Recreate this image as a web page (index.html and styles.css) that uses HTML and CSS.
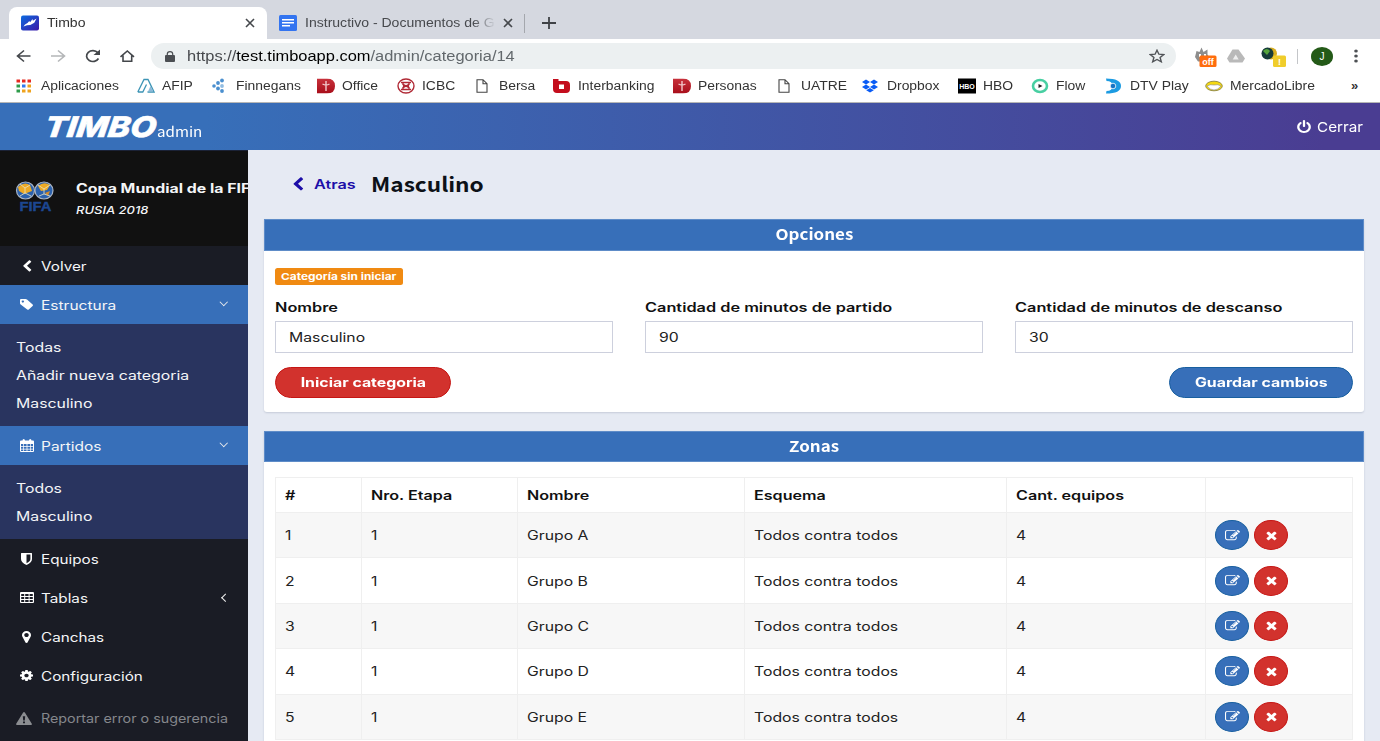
FILE: index.html
```html
<!DOCTYPE html>
<html lang="es">
<head>
<meta charset="utf-8">
<title>Timbo</title>
<link rel="stylesheet" href="styles.css">
</head>
<body>
<svg class="defs" width="0" height="0">
  <defs>
    <linearGradient id="gTimbo" x1="0" y1="0" x2="1" y2="1"><stop offset="0" stop-color="#0b6be0"/><stop offset="1" stop-color="#3c17a8"/></linearGradient>
    <linearGradient id="gRed" x1="0" y1="0" x2="0" y2="1"><stop offset="0" stop-color="#c8323c"/><stop offset="1" stop-color="#a80d1a"/></linearGradient>
    <symbol id="chev" viewBox="250 0 1292 1700" preserveAspectRatio="none"><path d="M1427 301l-531 531 531 531q19 19 19 45t-19 45l-166 166q-19 19-45 19t-45-19l-742-742q-19-19-19-45t19-45l742-742q19-19 45-19t45 19l166 166q19 19 19 45t-19 45z"/></symbol>
    <symbol id="power" viewBox="0 0 1792 1792" preserveAspectRatio="none"><path d="M1664 896q0 156-61 298t-164 245-245 164-298 61-298-61-245-164-164-245-61-298q0-182 80.5-343t226.5-270q43-32 95.5-25t83.5 50q32 42 24.5 94.5t-49.5 84.5q-98 74-151.5 181t-53.5 228q0 104 40.5 198.5t109.5 163.5 163.5 109.5 198.5 40.5 198.5-40.5 163.5-109.5 109.5-163.5 40.5-198.5q0-121-53.5-228t-151.5-181q-42-32-49.5-84.5t24.5-94.5q31-43 84-50t95 25q146 109 226.5 270t80.5 343zm-640-768v640q0 52-38 90t-90 38-90-38-38-90v-640q0-52 38-90t90-38 90 38 38 90z"/></symbol>
    <symbol id="times" viewBox="0 0 1792 1792" preserveAspectRatio="none"><path d="M1490 1322q0 40-28 68l-136 136q-28 28-68 28t-68-28l-294-294-294 294q-28 28-68 28t-68-28l-136-136q-28-28-28-68t28-68l294-294-294-294q-28-28-28-68t28-68l136-136q28-28 68-28t68 28l294 294 294-294q28-28 68-28t68 28l136 136q28 28 28 68t-28 68l-294 294 294 294q28 28 28 68z"/></symbol>
    <symbol id="edit" viewBox="0 0 1792 1792" preserveAspectRatio="none"><path d="M888 1184l116-116-152-152-116 116v56h96v96h56zm440-720q-16-16-33 1l-350 350q-17 17-1 33t33-1l350-350q17-17 1-33zm80 594v190q0 119-84.5 203.5t-203.5 84.5h-832q-119 0-203.5-84.5t-84.5-203.5v-832q0-119 84.5-203.5t203.5-84.5h832q63 0 117 25 15 7 18 23 3 17-9 29l-49 49q-14 14-32 8-23-6-45-6h-832q-66 0-113 47t-47 113v832q0 66 47 113t113 47h832q66 0 113-47t47-113v-126q0-13 9-22l64-64q15-15 35-7t20 29zm-96-738l288 288-672 672h-288v-288zm444 132l-92 92-288-288 92-92q28-28 68-28t68 28l152 152q28 28 28 68t-28 68z"/></symbol>
    <symbol id="cog" viewBox="128 128 1536 1536" preserveAspectRatio="none"><path d="M1152 896q0-106-75-181t-181-75-181 75-75 181 75 181 181 75 181-75 75-181zm512-109v222q0 12-8 23t-20 13l-185 28q-19 54-39 91 35 50 107 138 10 12 10 25t-9 23q-27 37-99 108t-94 71q-12 0-26-9l-138-108q-44 23-91 38-16 136-29 186-7 28-36 28h-222q-14 0-24.5-8.5t-11.5-21.5l-28-184q-49-16-90-37l-141 107q-10 9-25 9-14 0-25-11-126-114-165-168-7-10-7-23 0-12 8-23 15-21 51-66.5t54-70.5q-27-50-41-99l-183-27q-13-2-21-12.5t-8-23.5v-222q0-12 8-23t19-13l186-28q14-46 39-92-40-57-107-138-10-12-10-24 0-10 9-23 26-36 98.5-107.5t94.5-71.5q13 0 26 10l138 107q44-23 91-38 16-136 29-186 7-28 36-28h222q14 0 24.5 8.5t11.5 21.5l28 184q49 16 90 37l142-107q9-9 24-9 13 0 25 10 129 119 165 170 7 8 7 22 0 12-8 23-15 21-51 66.5t-54 70.5q26 50 41 98l183 28q13 2 21 12.5t8 23.5z"/></symbol>
    <symbol id="pin" viewBox="384 128 1024 1536" preserveAspectRatio="none"><path d="M1152 640q0-106-75-181t-181-75-181 75-75 181 75 181 181 75 181-75 75-181zm256 0q0 109-33 179l-364 774q-16 33-47.5 52t-67.5 19-67.5-19-46.5-52l-365-774q-33-70-33-179 0-212 150-362t362-150 362 150 150 362z"/></symbol>
    <symbol id="page" viewBox="0 0 12 14"><path d="M1 .7h6l4 4v8.6H1zM7 .7v4h4" fill="#fff" stroke="#444" stroke-width="1.1"/></symbol>
    <symbol id="dbadge" viewBox="0 0 18 15"><path d="M0 0h10q8 0 8 7.5T10 15H0z" fill="url(#gRed)"/><path d="M9 2.5v10M5.500 5.500q3.500 2 7 0" stroke="#f3c9cc" stroke-width="1.400" fill="none"/></symbol>
  </defs>
</svg>

<div class="tabs">
  <div class="tab active">
    <svg width="18" height="16" viewBox="0 0 18 16"><rect width="18" height="15" y=".5" rx="2" fill="url(#gTimbo)"/><path d="M2.500 11.500q1-2.500 4-3.500l1.800-2 .8 1.200L11.500 4l.4 1.800 3.600-2.300-2.200 4.200-4 2.300-3.300.2z" fill="#fff"/></svg>
    <span class="t">Timbo</span>
    <svg class="x" width="10" height="10" viewBox="0 0 10 10"><path d="M1 1l8 8M9 1L1 9"/></svg>
  </div>
  <div class="tab">
    <svg width="18" height="16" viewBox="0 0 18 16"><rect width="18" height="16" rx="1.500" fill="#3374f0"/><path d="M3 4.800h12M3 7.800h12M3 10.800h8" stroke="#fff" stroke-width="1.500"/></svg>
    <span class="t fade">Instructivo - Documentos de G</span>
    <svg class="x" width="10" height="10" viewBox="0 0 10 10"><path d="M1 1l8 8M9 1L1 9"/></svg>
  </div>
  <i class="tab-sep"></i>
  <svg width="14" height="12" viewBox="0 0 14 12"><path d="M7 0v12M0 6h14" stroke="#3f4246" stroke-width="1.800"/></svg>
</div>

<div class="toolbar">
  <svg width="130" height="20" viewBox="0 0 130 20" fill="none" stroke="#44474b" stroke-width="1.600">
    <path d="M14.500 10H1.500M8 4.500L1.500 10 8 15.500"/>
    <path d="M35 10h13M42 4.500l6.500 5.500-6.500 5.500" stroke="#b4b6b8"/>
    <path d="M82.500 12.500A6.300 5.400 0 1 1 81.800 6.700" stroke-width="1.700"/><path d="M84 3.500V9h-6.500z" fill="#44474b" stroke="none"/>
    <path d="M104.500 10.800L111.300 5l6.700 5.800M107 9.500V15.300h8.700V9.500"/>
  </svg>
  <div class="address">
    <svg width="10" height="11" viewBox="0 0 10 11"><rect y="4" width="10" height="7" rx="1" fill="#4b4e52"/><path d="M2.300 4V3a2.700 2.400 0 0 1 5.400 0v1" fill="none" stroke="#4b4e52" stroke-width="1.200"/></svg>
    <span class="t url">https://<b>test.timboapp.com</b><em>/admin/categoria/14</em></span>
    <svg class="star" width="16" height="14" viewBox="0 0 16 14"><path d="M8 1.200l1.900 4 4.900.4-3.700 2.900 1.200 4.300L8 10.500l-4.300 2.300 1.200-4.300L1.200 5.600l4.900-.4z" fill="none" stroke="#505357" stroke-width="1.400"/></svg>
  </div>
  <div class="exts">
    <svg width="96" height="24" viewBox="0 0 96 24">
      <path d="M1 13l1.500-6 3 1 2-4.500 2 4.500 4-2.500v5l2 3-2 4H4z" fill="#8d8d8d"/><path d="M5 10h2v3H5zM10 10h2v3h-2z" fill="#fff"/>
      <rect x="5.500" y="11.500" width="17" height="11.500" rx="1.500" fill="#ff6d0d"/>
      <path d="M38.500 5.500h6l6.500 9-2.500 4h-13L33 14.500z" fill="#b9b9b9"/><path d="M41.700 10.500l3 5h-6z" fill="#eee"/>
      <ellipse cx="77" cy="9.500" rx="6" ry="6" fill="#d8ae20"/><ellipse cx="73.500" cy="9.500" rx="6" ry="6" fill="#163b3a"/><path d="M69 7q4-4 7 0l-3 4z" fill="#55a43c"/>
      <rect x="79" y="11.500" width="13" height="11.500" rx="1.500" fill="#f0cd2c"/>
    </svg>
    <span class="badge off">off</span><span class="badge warn">!</span>
  </div>
  <i class="ext-sep"></i>
  <span class="avatar">J</span>
  <svg class="dots" width="4" height="14" viewBox="0 0 4 14" fill="#4d5054"><ellipse cx="2" cy="2" rx="1.800" ry="1.600"/><ellipse cx="2" cy="7" rx="1.800" ry="1.600"/><ellipse cx="2" cy="12" rx="1.800" ry="1.600"/></svg>
</div>

<div class="bookmarks">
  <div><svg viewBox="0 0 18 16"><path d="M.5 3h14.500" stroke="#e62a21" stroke-width="3" stroke-dasharray="3.500 2"/><path d="M.5 8H4M.5 13H4" stroke="#2e9b4a" stroke-width="3"/><path d="M6 8h3.500" stroke="#3079ee" stroke-width="3"/><path d="M11.500 8H15M6 13h3.500M11.500 13H15" stroke="#efa31e" stroke-width="3"/></svg><span class="t">Aplicaciones</span></div>
  <div><svg viewBox="0 0 18 16"><path d="M.8 14L7 1.500h4L17 14h-6.500M.8 14h5L9.500 6.500" fill="none" stroke="#3c94b5" stroke-width="1.300"/><path d="M11 13.500l2.500-5.500 3 5.500z" fill="#8dbad9"/></svg><span class="t">AFIP</span></div>
  <div><svg viewBox="0 0 18 16" fill="#4a8fcf"><circle cx="3" cy="8" r="1.800"/><circle cx="7" cy="5" r="1.900"/><circle cx="7" cy="10.500" r="1.900"/><circle cx="11" cy="2.500" r="1.900"/><circle cx="11" cy="8" r="1.900" fill="#92bde2"/><circle cx="11" cy="13" r="1.900"/></svg><span class="t">Finnegans</span></div>
  <div><svg viewBox="0 0 18 16"><use href="#dbadge" width="18" height="15" y=".5"/></svg><span class="t">Office</span></div>
  <div><svg viewBox="0 0 18 16" fill="none" stroke="#b02935" stroke-width="1.400"><ellipse cx="9" cy="8" rx="8" ry="7"/><path d="M4 4.500h10M6 8h6M4 11.500h10M6 4.500v2l6 3v2M12 4.500v2l-6 3v2"/></svg><span class="t">ICBC</span></div>
  <div><svg viewBox="0 0 18 16"><use href="#page" x="2" y="1" width="12" height="14"/></svg><span class="t">Bersa</span></div>
  <div><svg viewBox="0 0 18 16"><path fill-rule="evenodd" d="M0 1h5.500v2H13q4 0 4 4v4q0 4-4 4H4q-4 0-4-4zM6 6.500V11h5V6.500z" fill="#c40d1d"/></svg><span class="t">Interbanking</span></div>
  <div><svg viewBox="0 0 18 16"><use href="#dbadge" width="18" height="15" y=".5"/></svg><span class="t">Personas</span></div>
  <div><svg viewBox="0 0 18 16"><use href="#page" x="2" y="1" width="12" height="14"/></svg><span class="t">UATRE</span></div>
  <div><svg viewBox="0 0 18 16" fill="#0a5cf5"><path d="M4 1.500L8 4 4 6.500 0 4zM12 1.500L16 4l-4 2.500L8 4zM4 6.500L8 9l-4 2.500L0 9zM12 6.500L16 9l-4 2.500L8 9zM8 10l3.800 2.200L8 14.500l-3.800-2.300z"/></svg><span class="t">Dropbox</span></div>
  <div><svg viewBox="0 0 18 16"><rect y=".5" width="18" height="15" fill="#000"/><text x="9" y="10.500" text-anchor="middle" class="hbo">HBO</text></svg><span class="t">HBO</span></div>
  <div><svg viewBox="0 0 18 16"><ellipse cx="9" cy="8" rx="7" ry="6" fill="#fff" stroke="#48cfa2" stroke-width="2.600"/><path d="M7.500 6l4 2-4 2z" fill="#222"/></svg><span class="t">Flow</span></div>
  <div><svg viewBox="0 0 18 16"><path d="M1 .5q15 0 15 7.500T1 15.500L1.500 13q6 0 6-5t-6-5z" fill="#1c9be2"/><circle cx="8" cy="8" r="2.800" fill="#1574c4" stroke="#fff" stroke-width=".8"/></svg><span class="t">DTV Play</span></div>
  <div><svg viewBox="0 0 18 16"><ellipse cx="9" cy="8" rx="8.300" ry="4.800" fill="#f5d90f" stroke="#8f8741" stroke-width=".9"/><path d="M2 8q3.500-2 7-1 4-1 7 1-3 4-7 4T2 8z" fill="#fff" stroke="#888" stroke-width=".6"/></svg><span class="t">MercadoLibre</span></div>
  <b class="more">»</b>
</div>

<header class="appbar">
  <div class="brand"><span class="logo">TIMBO</span><span class="sub">admin</span></div>
  <a class="logout"><svg width="16" height="14"><use href="#power"/></svg><span class="t">Cerrar</span></a>
</header>

<div class="shell">
  <aside>
    <div class="profile">
      <svg width="40" height="34" viewBox="0 0 40 34"><g stroke="#a9b4c4" stroke-width="1.200"><ellipse cx="10.500" cy="11.500" rx="9" ry="8.500" fill="#2c62ad"/><ellipse cx="29" cy="11.500" rx="9" ry="8.500" fill="#2c62ad"/></g><path d="M3 8q6-6 12-2l2 6-8 3-5-3z" fill="#edaa25"/><path d="M23 7q6-5 12-1l-3 5-6 1z" fill="#edaa25"/><path d="M30 14l5-2-2 5z" fill="#d98b24"/><path d="M5 5l5 4 5-3M10 9v5l-5 3M10 14l6 3M23 6l6 4 6-4M29 10v5l-5 2M29 15l6 2" stroke="#e9e3c4" stroke-width=".8" fill="none"/><text x="4.500" y="32" textLength="32" lengthAdjust="spacingAndGlyphs" class="fifa">FIFA</text></svg>
      <div><strong class="t">Copa Mundial de la FIFA</strong><em class="t">RUSIA 2018</em></div>
    </div>
    <nav>
      <a class="item"><svg width="10" height="12"><use href="#chev"/></svg><span class="t">Volver</span></a>
      <a class="item on"><svg width="13" height="11" viewBox="0 0 13 11"><path fill-rule="evenodd" d="M0 1q0-1 1-1h4.500q.8 0 1.500.6L12.600 5.500q.8.700 0 1.400L8.800 10.500q-.8.700-1.600 0L.7 5.500Q0 5 0 4.200zM2.800 1.400a1.100 1 0 1 0 .1 0z"/></svg><span class="t">Estructura</span><i class="down"></i></a>
      <div class="subnav"><a class="t">Todas</a><a class="t">Añadir nueva categoria</a><a class="t">Masculino</a></div>
      <a class="item on"><svg width="14" height="13" viewBox="0 0 14 13"><path fill-rule="evenodd" d="M0 2.500q0-1 1-1h1.500Q2.500 0 3.700 0T5 1.500h4Q9 0 10.200 0t1.300 1.500H13q1 0 1 1V12q0 1-1 1H1q-1 0-1-1zM1 5v2h2.300V5zm3 0v2h2.600V5zm3.400 0v2H10V5zm3.300 0v2H13V5zM1 7.700v2h2.300v-2zm3 0v2h2.600v-2zm3.400 0v2H10v-2zm3.300 0v2H13v-2zM1 10.400v1.700h2.300v-1.700zm3 0v1.700h2.600v-1.700zm3.400 0v1.700H10v-1.700zm3.300 0v1.700H13v-1.700z"/></svg><span class="t">Partidos</span><i class="down"></i></a>
      <div class="subnav"><a class="t">Todos</a><a class="t">Masculino</a></div>
      <a class="item"><svg width="11" height="12" viewBox="0 0 11 12"><path fill-rule="evenodd" d="M0 .5Q0 0 .5 0h10q.5 0 .5.500V6q0 3.500-5.500 6Q0 9.500 0 6zM5.500 1.500v8.700Q9.400 8.500 9.400 6V1.500z"/></svg><span class="t">Equipos</span></a>
      <a class="item"><svg width="14" height="11" viewBox="0 0 14 11"><path fill-rule="evenodd" d="M0 1q0-1 1-1h12q1 0 1 1v9q0 1-1 1H1q-1 0-1-1zM1.200 2v2h3V2zm4 0v2h3.400V2zm4.400 0v2h3.200V2zM1.200 5v2h3V5zm4 0v2h3.400V5zm4.400 0v2h3.200V5zM1.200 8v2h3V8zm4 0v2h3.400V8zm4.400 0v2h3.200V8z"/></svg><span class="t">Tablas</span><i class="left"></i></a>
      <a class="item"><svg width="9" height="12"><use href="#pin"/></svg><span class="t">Canchas</span></a>
      <a class="item"><svg width="13" height="11"><use href="#cog"/></svg><span class="t">Configuración</span></a>
      <a class="item report"><svg width="16" height="13" viewBox="0 0 16 13"><path fill-rule="evenodd" d="M7 .7q1-1.400 2 0l6.800 11Q16.300 13 15 13H1Q-.3 13 .2 11.700zM6.800 4.300l.4 4.200h1.600l.4-4.200zM7 9.500v1.800h2V9.500z"/></svg><span class="t">Reportar error o sugerencia</span></a>
    </nav>
  </aside>

  <main>
    <div class="title"><svg width="12" height="14"><use href="#chev"/></svg><a class="t">Atras</a><h1>Masculino</h1></div>

    <section class="card options">
      <h2><span>Opciones</span></h2>
      <div class="body">
        <span class="label"><span class="t">Categoría sin iniciar</span></span>
        <div class="fields">
          <div><label class="t">Nombre</label><div class="input"><span class="t">Masculino</span></div></div>
          <div><label class="t">Cantidad de minutos de partido</label><div class="input"><span class="t">90</span></div></div>
          <div><label class="t">Cantidad de minutos de descanso</label><div class="input"><span class="t">30</span></div></div>
        </div>
        <div class="actions"><button class="btn red"><span class="t">Iniciar categoria</span></button><button class="btn blue"><span class="t">Guardar cambios</span></button></div>
      </div>
    </section>

    <section class="card zones">
      <h2><span>Zonas</span></h2>
      <table>
        <colgroup><col class="c1"><col class="c2"><col class="c3"><col class="c4"><col class="c5"><col class="c6"></colgroup>
        <thead><tr><th><span class="t">#</span></th><th><span class="t">Nro. Etapa</span></th><th><span class="t">Nombre</span></th><th><span class="t">Esquema</span></th><th><span class="t">Cant. equipos</span></th><th></th></tr></thead>
        <tbody>
          <tr><td><span class="t">1</span></td><td><span class="t">1</span></td><td><span class="t">Grupo A</span></td><td><span class="t">Todos contra todos</span></td><td><span class="t">4</span></td><td><div class="ops"><b class="blue"><svg width="15" height="13"><use href="#edit"/></svg></b><b class="red"><svg width="15" height="13"><use href="#times"/></svg></b></div></td></tr>
          <tr><td><span class="t">2</span></td><td><span class="t">1</span></td><td><span class="t">Grupo B</span></td><td><span class="t">Todos contra todos</span></td><td><span class="t">4</span></td><td><div class="ops"><b class="blue"><svg width="15" height="13"><use href="#edit"/></svg></b><b class="red"><svg width="15" height="13"><use href="#times"/></svg></b></div></td></tr>
          <tr><td><span class="t">3</span></td><td><span class="t">1</span></td><td><span class="t">Grupo C</span></td><td><span class="t">Todos contra todos</span></td><td><span class="t">4</span></td><td><div class="ops"><b class="blue"><svg width="15" height="13"><use href="#edit"/></svg></b><b class="red"><svg width="15" height="13"><use href="#times"/></svg></b></div></td></tr>
          <tr><td><span class="t">4</span></td><td><span class="t">1</span></td><td><span class="t">Grupo D</span></td><td><span class="t">Todos contra todos</span></td><td><span class="t">4</span></td><td><div class="ops"><b class="blue"><svg width="15" height="13"><use href="#edit"/></svg></b><b class="red"><svg width="15" height="13"><use href="#times"/></svg></b></div></td></tr>
          <tr><td><span class="t">5</span></td><td><span class="t">1</span></td><td><span class="t">Grupo E</span></td><td><span class="t">Todos contra todos</span></td><td><span class="t">4</span></td><td><div class="ops"><b class="blue"><svg width="15" height="13"><use href="#edit"/></svg></b><b class="red"><svg width="15" height="13"><use href="#times"/></svg></b></div></td></tr>
        </tbody>
      </table>
    </section>
  </main>
</div>
</body>
</html>
```
FILE: styles.css
```css
* { box-sizing: border-box; }
body { margin: 0; height: 741px; overflow: hidden; display: flex; flex-direction: column; background: #e6eaf3; font: 12.5px/20px Inter, sans-serif; color: #111; }
svg { display: block; flex: none; }
.defs { position: absolute; }
.t { display: inline-block; white-space: nowrap; transform: translateY(var(--dy, 0)) scaleX(var(--s, 1.26)); transform-origin: left center; }

/* browser chrome */
.tabs, .toolbar, .bookmarks { font-family: "Liberation Sans", Arial, sans-serif; flex: none; }
.tabs { height: 39px; background: #d5d8e0; display: flex; align-items: center; padding: 7px 0 0 9px; --s: 1.17; }
.tab { display: flex; align-items: center; height: 32px; padding: 0 12px; font-size: 12px; color: #47494d; width: 258px; }
.tab.active { background: #fff; border-radius: 8px 8px 0 0; color: #333; }
.tab .t { margin-left: 8px; }
.tab .x { margin-left: auto; fill: none; stroke: #45484c; stroke-width: 1.6; }
.tab .fade { width: 163px; overflow: hidden; -webkit-mask-image: linear-gradient(90deg, #000 88%, transparent); mask-image: linear-gradient(90deg, #000 88%, transparent); }
.tab-sep { width: 1px; height: 19px; background: #a4a7ad; margin: 0 17px 0 -1px; }
.toolbar { height: 35px; background: #fff; display: flex; align-items: center; padding: 0 0 1px 16px; }
.address { width: 1025px; height: 26px; margin-left: 5px; border-radius: 13px; background: #ecf0f1; display: flex; align-items: center; padding: 0 11px 0 14px; }
.url { margin-left: 12px; font-size: 14px; color: #47494d; --s: 1.173; }
.url b { font-weight: 400; color: #000; }
.url em { font-style: normal; color: #62686c; }
.star { margin-left: auto; }
.exts { position: relative; width: 96px; height: 24px; margin-left: 18px; }
.badge { position: absolute; top: 12px; height: 12px; font: 700 9px/12px "Liberation Sans", sans-serif; color: #fff; text-align: center; }
.off { left: 5px; width: 18px; }
.warn { left: 79px; width: 13px; }
.ext-sep { width: 1px; height: 15px; background: #c4c6c9; margin-left: 7px; }
.avatar { width: 22px; height: 19px; border-radius: 50%; background: #245a18; color: #fff; font-size: 10px; line-height: 19px; text-align: center; margin-left: 13px; }
.dots { margin-left: 21px; }
.bookmarks { height: 29px; background: #fff; border-bottom: 1px solid #b6b6b6; display: grid; grid-template-columns: 121px 74px 106px 80px 77px 79px 120px 103px 86px 96px 73px 74px 100px 146px auto; padding: 0 0 5px 16px; align-items: center; font-size: 12px; color: #333; --s: 1.157; }
.bookmarks div { display: flex; align-items: center; gap: 7px; }
.bookmarks svg { width: 18px; height: 16px; }
.more { font-size: 13px; font-weight: 700; line-height: 16px; }
.hbo { font: 900 7px "Liberation Sans", sans-serif; fill: #fff; }

/* app bar */
.appbar { height: 47px; flex: none; background: linear-gradient(90deg, #376fb9 0, #376fb9 15%, #4a3d92 96%); display: flex; justify-content: space-between; padding: 0 16px 0 45px; color: #fff; }
.brand { display: flex; }
.logo { font: italic 800 28.5px/47px Inter, sans-serif; width: 112px; transform: scaleX(1.17) skewX(-7deg); transform-origin: left; -webkit-text-stroke: .6px #fff; }
.sub { font: 13.5px/20px "Noto Sans CJK SC", sans-serif; padding-top: 18px; transform: scaleX(1.12); transform-origin: left; }
.logout { display: flex; align-items: center; gap: 5px; width: 68px; font-size: 13.5px; --s: 1.13; }
.logout svg { fill: #fff; }

.shell { flex: 1; min-height: 0; display: flex; overflow: hidden; --dy: 1px; }
aside { width: 248px; flex: none; background: #1a1c25; color: #f4f5f7; overflow: hidden; }
.profile { height: 96px; background: #111; border-top: 1px solid #1b2236; display: flex; padding: 28px 0 0 15px; gap: 21px; }
.profile strong, .profile em { display: block; font-weight: 700; line-height: 18px; --s: 1.27; }
.profile em { font-size: 11px; font-weight: 500; line-height: 25px; --s: 1.18; }
.fifa { font: 700 13px "Liberation Sans", sans-serif; fill: #1c4791; stroke: #1c4791; stroke-width: .4px; }
.item { height: 39px; align-items: center; display: grid; grid-template-columns: 27px 1fr auto; padding: 0 20px 0 13px; --s: 1.22; }
.item svg { fill: #fff; margin: 0 auto; }
.item .t { margin-left: 1px; }
.item.on { background: #376fb9; --s: 1.24; }
.down, .left { width: 5.5px; height: 5.5px; border: solid #eee; border-width: 0 1.2px 1.2px 0; }
.item i { margin-right: 2px; }
.down { transform: translateY(-3px) rotate(45deg); }
.left { transform: translateX(2px) rotate(135deg); }
.subnav { background: #29345f; padding: 9px 16px; display: flex; flex-direction: column; line-height: 28px; --s: 1.265; }
.item.report { height: 46px; color: #85878c; padding-left: 10px; --s: 1.145; }
.report svg { fill: #8b8d91; }
.report .t { margin-left: 4px; }

main { flex: 1; padding: 0 16px; min-width: 0; display: flex; flex-direction: column; }
.title { height: 69px; flex: none; display: flex; align-items: center; padding: 0 0 1px 28px; color: #1d0ea8; }
.title svg { fill: #1d0ea8; }
.title a { margin-left: 10px; width: 58px; font-weight: 600; --s: 1.3; }
h1 { margin: 0; font: 700 20px/30px "Noto Sans CJK SC", sans-serif; color: #0d1117; transform: translateX(-1px) scaleX(1.13); transform-origin: left; }
.card { background: #fff; border-radius: 0 0 3px 3px; box-shadow: 0 1px 2px #c5cbd8; }
.card h2 { margin: 0; height: 32px; background: #376fb9; border: 1px solid #5e8cc8; color: #fff; text-align: center; font: 700 15px/28px "Noto Sans CJK SC", sans-serif; }
.card h2 span { display: inline-block; transform: scaleX(1.13); }
.options { height: 193px; flex: none; margin-bottom: 18.5px; }
.body { padding: 17px 11px 0; }
.label { display: block; width: 128px; height: 17px; border-radius: 2.5px; background: #f08a12; color: #fff; font: 700 9.5px/16px Inter, sans-serif; padding-left: 6px; --s: 1.25; }
.fields { display: grid; grid-template-columns: 338px 338px 338px; column-gap: 32px; margin-top: 12px; }
.fields label { font-weight: 600; line-height: 20px; display: block; width: max-content; --s: 1.305; }
.input { height: 32px; margin-top: 4px; border: 1px solid #cdd0dd; padding: 5px 13px; color: #222; }
.actions { display: flex; justify-content: space-between; margin-top: 14px; --dy: 0; }
.btn { height: 31px; border-radius: 16px; color: #fff; font: 700 12.5px/20px Inter, sans-serif; padding: 0; }
.btn .t { transform-origin: center; --s: 1.27; }
.red { background: #d2322d; border: 1px solid #c51614; }
.blue { background: #376fb9; border: 1px solid #185f9f; }
.btn.red { width: 176px; }
.btn.blue { width: 184px; }
.zones { flex: 1; min-height: 0; overflow: hidden; border-radius: 0; }
.zones h2 { height: 31.5px; line-height: 27px; }
table { margin: 15px 0 0 11px; width: 1077px; table-layout: fixed; border-collapse: collapse; }
.c1 { width: 86px; } .c2 { width: 156px; } .c3 { width: 227px; } .c4 { width: 262px; } .c5 { width: 199px; } .c6 { width: 147px; }
th, td { border: 1px solid #efefef; text-align: left; padding: 0 9px 0 9px; font-weight: 400; color: #222; }
th { height: 35px; font-weight: 600; color: #111; --s: 1.29; }
td { height: 45.4px; }
tbody tr:nth-child(odd) { background: #f7f7f7; }
.ops { display: flex; gap: 5px; }
.ops b { width: 34px; height: 30px; border-radius: 50%; display: grid; place-items: center; }
.ops svg { fill: #fff; }
```
